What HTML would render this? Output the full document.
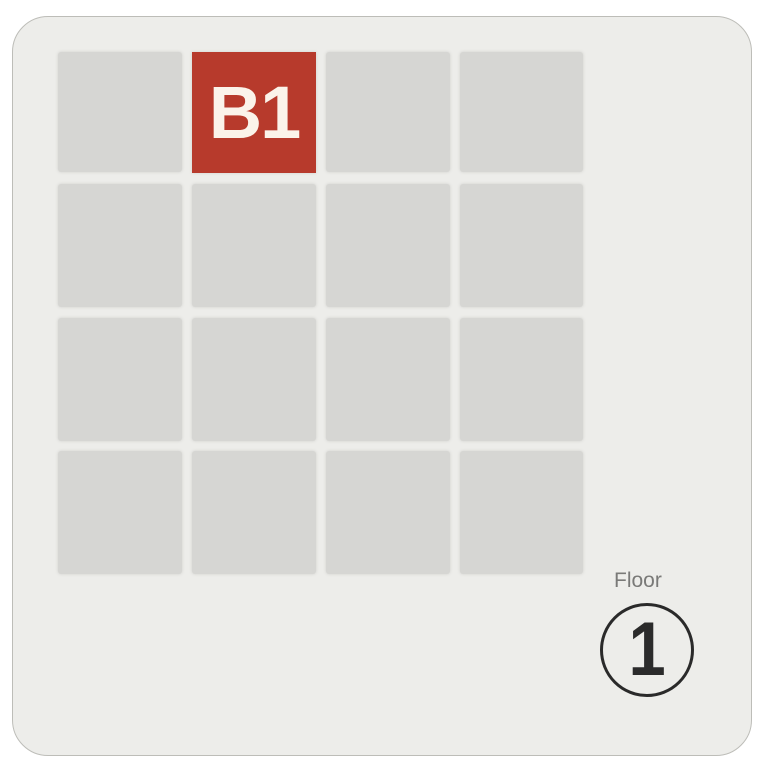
<!DOCTYPE html>
<html><head><style>
html,body{margin:0;padding:0;width:759px;height:762px;background:#fff;overflow:hidden}
.card{position:absolute;left:12px;top:16px;width:740px;height:740px;background:#ededea;border-radius:36px;border:1px solid #bdbdb8;box-sizing:border-box}
.c{position:absolute;background:#d6d6d3;border-radius:3px;box-shadow:0 0 3px #d0d0cc}
.r{background:#b73a2c;color:#fbf3ea;font:bold 74px "Liberation Sans",sans-serif;display:flex;align-items:center;justify-content:center;letter-spacing:-2px;border-radius:0}
.fl{position:absolute;left:614px;top:569px;font:21px "Liberation Sans",sans-serif;color:#7a7a78}
.circ{position:absolute;left:600px;top:603px;width:94px;height:94px;border:3px solid #2a2a2a;border-radius:50%;display:flex;align-items:center;justify-content:center;box-sizing:border-box}
.circ span{font:bold 76px "Liberation Sans",sans-serif;color:#2b2b2b;display:inline-block;transform:scaleX(0.88);line-height:1}
</style></head><body>
<div class="card"></div>
<div class="c" style="left:58px;top:52px;width:124px;height:120px"></div>
<div class="c r" style="left:192px;top:52px;width:124px;height:121px">B1</div>
<div class="c" style="left:326px;top:52px;width:124px;height:120px"></div>
<div class="c" style="left:460px;top:52px;width:123px;height:120px"></div>
<div class="c" style="left:58px;top:184px;width:124px;height:123px"></div>
<div class="c" style="left:192px;top:184px;width:124px;height:123px"></div>
<div class="c" style="left:326px;top:184px;width:124px;height:123px"></div>
<div class="c" style="left:460px;top:184px;width:123px;height:123px"></div>
<div class="c" style="left:58px;top:318px;width:124px;height:123px"></div>
<div class="c" style="left:192px;top:318px;width:124px;height:123px"></div>
<div class="c" style="left:326px;top:318px;width:124px;height:123px"></div>
<div class="c" style="left:460px;top:318px;width:123px;height:123px"></div>
<div class="c" style="left:58px;top:451px;width:124px;height:123px"></div>
<div class="c" style="left:192px;top:451px;width:124px;height:123px"></div>
<div class="c" style="left:326px;top:451px;width:124px;height:123px"></div>
<div class="c" style="left:460px;top:451px;width:123px;height:123px"></div>
<div class="fl">Floor</div>
<div class="circ"><span>1</span></div>
</body></html>
